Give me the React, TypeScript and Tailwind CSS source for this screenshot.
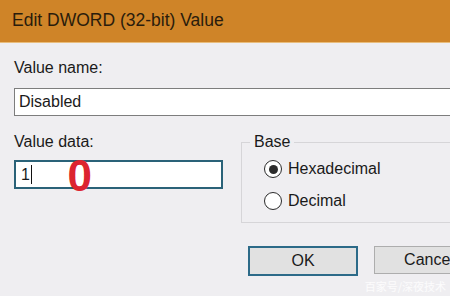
import React from 'react';

function Radio({ checked, label }: { checked?: boolean; label: string }) {
  return (
    <label className="flex items-center h-[32px] gap-[6px] pl-[22px]">
      <span className="w-[18px] h-[18px] rounded-full border-[1.5px] border-[#2b2b2b] bg-white flex items-center justify-center">
        {checked && <span className="w-[9px] h-[9px] rounded-full bg-[#2b2b2b]" />}
      </span>
      <span>{label}</span>
    </label>
  );
}

export default function App() {
  return (
    <div
      className="relative w-[450px] h-[296px] overflow-hidden bg-[#efeef1] text-[16px] leading-[20px] text-[#1a1a1a]"
      style={{ fontFamily: '"Liberation Sans", Arial, sans-serif' }}
    >
      {/* Title bar */}
      <div className="h-[43px] bg-[#cf8428] border-b border-[#e9bd7c] flex items-center pl-[12px] pb-[2px] text-[17.5px] text-[#2a1c0c]">
        Edit DWORD (32-bit) Value
      </div>

      <div className="w-[560px] pl-[14px] pt-[15px]">
        <div>Value name:</div>
        <div className="mt-[10px] h-[28px] border border-[#7d7d7d] bg-white flex items-center pl-[4px]">
          Disabled
        </div>

        <div className="flex mt-[16px] gap-[18px]">
          {/* Value data */}
          <div className="w-[209px] shrink-0">
            <div>Value data:</div>
            <div className="mt-[8px] h-[29px] border-2 border-[#2a6278] bg-white flex items-center pl-[5px]">
              <span>1</span>
              <span className="w-[1.5px] h-[19px] bg-[#111] ml-[1px]" />
              <span className="ml-[35px] mt-[2px] text-[44px] leading-[30px] font-bold text-[#dc2430]">0</span>
            </div>
          </div>

          {/* Base group */}
          <fieldset className="flex-1 border border-[#d6d5d8] pt-[1px] pb-[5px]">
            <legend className="ml-[8px] px-[4px]">Base</legend>
            <Radio checked label="Hexadecimal" />
            <Radio label="Decimal" />
          </fieldset>
        </div>

        {/* Buttons */}
        <div className="flex items-start gap-[16px] mt-[23px] ml-[234px]">
          <button className="w-[110px] h-[30px] bg-[#e1e1e1] border-2 border-[#2c6a88] flex items-center justify-center">
            OK
          </button>
          <button className="w-[110px] h-[28px] bg-[#e1e1e1] border border-[#adadad] flex items-center justify-center">
            Cancel
          </button>
        </div>
      </div>

      {/* Watermark */}
      <div
        className="absolute right-[4px] bottom-[4px] text-[11px] leading-[12px] text-white/80"
        style={{ fontFamily: '"Noto Sans CJK SC", sans-serif' }}
      >
        百家号/深夜技术
      </div>
    </div>
  );
}
